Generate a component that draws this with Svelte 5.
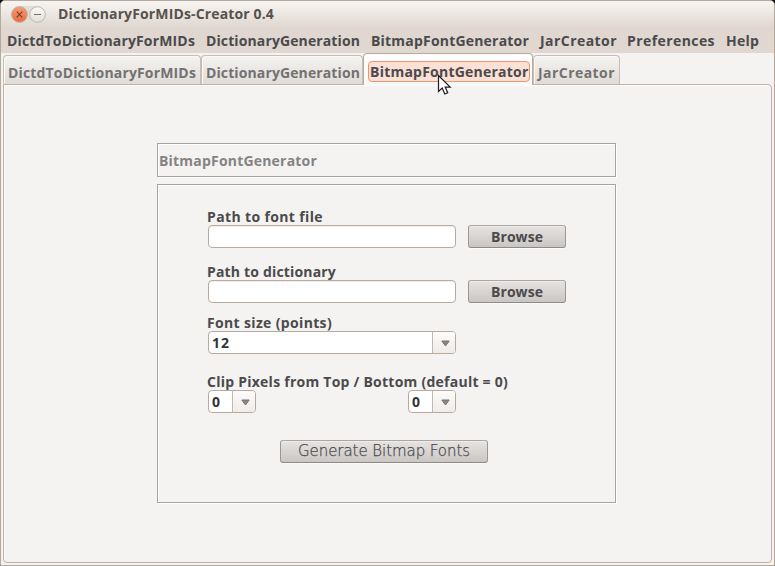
<script>
  const menus = [
    { name: 'DictdToDictionaryForMIDs', w: 188, gap: 7 },
    { name: 'DictionaryGeneration', w: 154, gap: 11 },
    { name: 'BitmapFontGenerator', w: 158, gap: 11 },
    { name: 'JarCreator', w: 77, gap: 11 },
    { name: 'Preferences', w: 88, gap: 10 },
    { name: 'Help', w: 33, gap: 11 }
  ];
  const tabs = [
    { name: 'DictdToDictionaryForMIDs', w: 188, box: 198 },
    { name: 'DictionaryGeneration', w: 154, box: 162 },
    { name: 'BitmapFontGenerator', w: 158.5, box: 170, active: true },
    { name: 'JarCreator', w: 77, box: 87 }
  ];

  // Spreads the letters so that a label fills its nominal width.
  function fit(node, width) {
    const range = document.createRange();
    range.selectNodeContents(node);
    const natural = range.getBoundingClientRect().width;
    node.style.letterSpacing = (width - natural) / node.textContent.length + 'px';
  }
</script>

{#snippet combo(value, w)}
  <div class="combo">
    <span class="value"><span use:fit={w}>{value}</span></span>
    <span class="drop">
      <svg width="9" height="7" viewBox="0 0 9 7"><path d="M.8 1h7.4L4.5 6z" fill="#8a8683" stroke="#77736f" /></svg>
    </span>
  </div>
{/snippet}

<div class="window">
  <header>
    <div class="controls">
      <svg width="36" height="20" viewBox="0 0 36 20">
        <defs>
          <linearGradient id="close" x2="0" y2="1"><stop stop-color="#f79a78" /><stop offset="1" stop-color="#ec6a3a" /></linearGradient>
          <linearGradient id="mini" x2="0" y2="1"><stop stop-color="#faf9f7" /><stop offset="1" stop-color="#e3dfd9" /></linearGradient>
        </defs>
        <rect x=".5" y="1" width="35" height="18" rx="9" fill="#e2ddd6" />
        <circle cx="9.5" cy="9.5" r="7.8" fill="url(#close)" stroke="#c3a597" />
        <path d="m6.7 6.7 5.6 5.6m0-5.6-5.6 5.6" stroke="#713e2a" stroke-width="1.1" />
        <circle cx="27.5" cy="9.5" r="7.8" fill="url(#mini)" stroke="#bdb6ae" />
        <path d="M24 9.5h7" stroke="#77716b" />
      </svg>
    </div>
    <span class="title"><span use:fit={216}>DictionaryForMIDs-Creator 0.4</span></span>
  </header>
  <nav>
    {#each menus as m}
      <span class="menu" style="width:{m.w}px;margin-left:{m.gap}px"><span use:fit={m.w}>{m.name}</span></span>
    {/each}
  </nav>
  <div class="tabs">
    {#each tabs as t}
      <div class="tab" class:active={t.active} style="width:{t.box}px">
        <span class="face"><span use:fit={t.w}>{t.name}</span></span>
      </div>
    {/each}
  </div>
  <main>
    <section class="heading"><span use:fit={158}>BitmapFontGenerator</span></section>
    <section class="form">
      <label class="l1"><span use:fit={116}>Path to font file</span></label>
      <div class="row"><input type="text" /><button><span use:fit={52}>Browse</span></button></div>
      <label class="l2"><span use:fit={129}>Path to dictionary</span></label>
      <div class="row"><input type="text" /><button><span use:fit={52}>Browse</span></button></div>
      <label class="l3"><span use:fit={125}>Font size (points)</span></label>
      <div class="row wide">{@render combo('12', 18)}</div>
      <label class="l4"><span use:fit={301}>Clip Pixels from Top / Bottom (default = 0)</span></label>
      <div class="row pair">{@render combo('0', 9)}{@render combo('0', 9)}</div>
      <button class="generate"><span use:fit={172}>Generate Bitmap Fonts</span></button>
    </section>
  </main>
  <svg class="cursor" width="16" height="22" viewBox="0 0 16 22">
    <path d="M1.5 1.5v16l3.7-3.4 2.6 5.9 2.9-1.3-2.5-5.6h5z" fill="#fff" stroke="#1c1c1c" stroke-width="1.2" />
  </svg>
</div>

<style>
  :global(body) { background: #111; }
  .window, .window * { box-sizing: border-box; }
  .window {
    position: relative;
    display: flex;
    flex-direction: column;
    width: 775px;
    height: 566px;
    border: 1px solid #b5a99d;
    border-radius: 5px 5px 0 0;
    background: #f4f3f2;
    overflow: hidden;
    font: 600 14px/20px "Open Sans", "Noto Sans", sans-serif;
    color: #4b4a4c;
    white-space: nowrap;
  }
  header {
    display: flex;
    align-items: center;
    height: 27px;
    padding-left: 9px;
    background: linear-gradient(#f7f5f2, #dfd7d0);
    flex: none;
  }
  .controls { height: 20px; }
  .controls svg, .drop svg { display: block; }
  .title { margin: 0 0 1px 12px; font-weight: 700; color: #57524c; }
  nav {
    display: flex;
    align-items: center;
    height: 25px;
    background: #dfd7d0;
    flex: none;
  }
  .menu { font-weight: 700; }
  .menu:first-child { margin-left: 6px !important; }
  .tabs {
    display: flex;
    align-items: flex-end;
    height: 31px;
    padding-left: 2px;
    flex: none;
  }
  .tab {
    height: 29px;
    padding: 7px 0 0 4px;
    border: 1px solid #c7bdb4;
    border-width: 1px 1px 0;
    border-radius: 4px 4px 0 0;
    background: linear-gradient(#f5f4f2, #e0dbd5);
    box-shadow: inset 1px 1px #faf9f8;
    font-weight: 700;
    color: #737172;
  }
  .tab.active {
    height: 32px;
    margin-bottom: -1px;
    padding: 7px 0 0 4px;
    border-color: #b9aca1;
    background: linear-gradient(#fff, #f8f7f6);
    color: #4b4a4c;
    z-index: 1;
  }
  .active .face {
    display: block;
    width: 162px;
    height: 21px;
    padding-left: 1px;
    border: 1px solid #ee956e;
    border-radius: 4px;
    background: #fae0d5;
    line-height: 19px;
  }
  main {
    display: flex;
    flex-direction: column;
    gap: 7px;
    width: 769px;
    height: 479px;
    margin-left: 2px;
    padding: 58px 0 0 153px;
    border: 1px solid #bfb2a6;
    border-radius: 0 4px 4px 4px;
    box-shadow: inset 1px 1px #fbfbfa;
    flex: none;
  }
  section { width: 459px; border: 1px solid #a6a4a2; box-shadow: 1px 1px #fff, inset 1px 1px #fff; flex: none; }
  .heading { height: 34px; padding: 7px 1px; color: #858383; font-weight: 700; }
  .form {
    display: flex;
    flex-direction: column;
    height: 319px;
    padding: 22px 0 0 50px;
  }
  label { display: block; height: 18px; flex: none; font-weight: 700; margin-left: -1px; }
  .l2 { margin-top: 14px; }
  .l3 { margin-top: 10px; }
  .l4 { margin-top: 18px; }
  .row { display: flex; gap: 12px; height: 23px; width: 248px; flex: none; }
  .pair { justify-content: space-between; }
  input {
    width: 248px;
    height: 23px;
    margin: 0;
    padding: 0 4px;
    border: 1px solid #b8aa9f;
    border-radius: 4px;
    background: #fff;
    box-shadow: inset 0 1px #f2efed;
    flex: none;
  }
  button {
    display: block;
    width: 98px;
    height: 23px;
    padding: 0;
    border: 1px solid #9d9894;
    border-color: #aaa6a3 #9d9894 #8f8a86;
    border-radius: 3px;
    background: linear-gradient(#e6e3e1, #cac6c3);
    box-shadow: inset 0 1px #efedeb, 0 1px #fbfafa;
    font: 700 14px/20px "Open Sans", "Noto Sans", sans-serif;
    color: #4b4a4c;
    flex: none;
  }
  .generate {
    width: 208px;
    margin: 27px 0 0 72px;
    font: 200 15px/19px "DejaVu Sans Light", "DejaVu Sans", sans-serif;
    -webkit-text-stroke: .25px #4b4a4c;
  }
  .combo {
    display: flex;
    width: 48px;
    height: 23px;
    border: 1px solid #b8aa9f;
    border-radius: 4px;
    background: #fff;
    overflow: hidden;
  }
  .wide .combo { width: 248px; }
  .value { flex: 1; padding-left: 3px; font-weight: 700; line-height: 22px; color: #343336; }
  .drop {
    display: flex;
    align-items: center;
    justify-content: center;
    width: 23px;
    padding: 2px 0 0 2px;
    border-left: 1px solid #c3b8ae;
    background: linear-gradient(#fcfcfb, #efecea);
  }
  .cursor { position: absolute; left: 436px; top: 73px; z-index: 2; }
</style>
